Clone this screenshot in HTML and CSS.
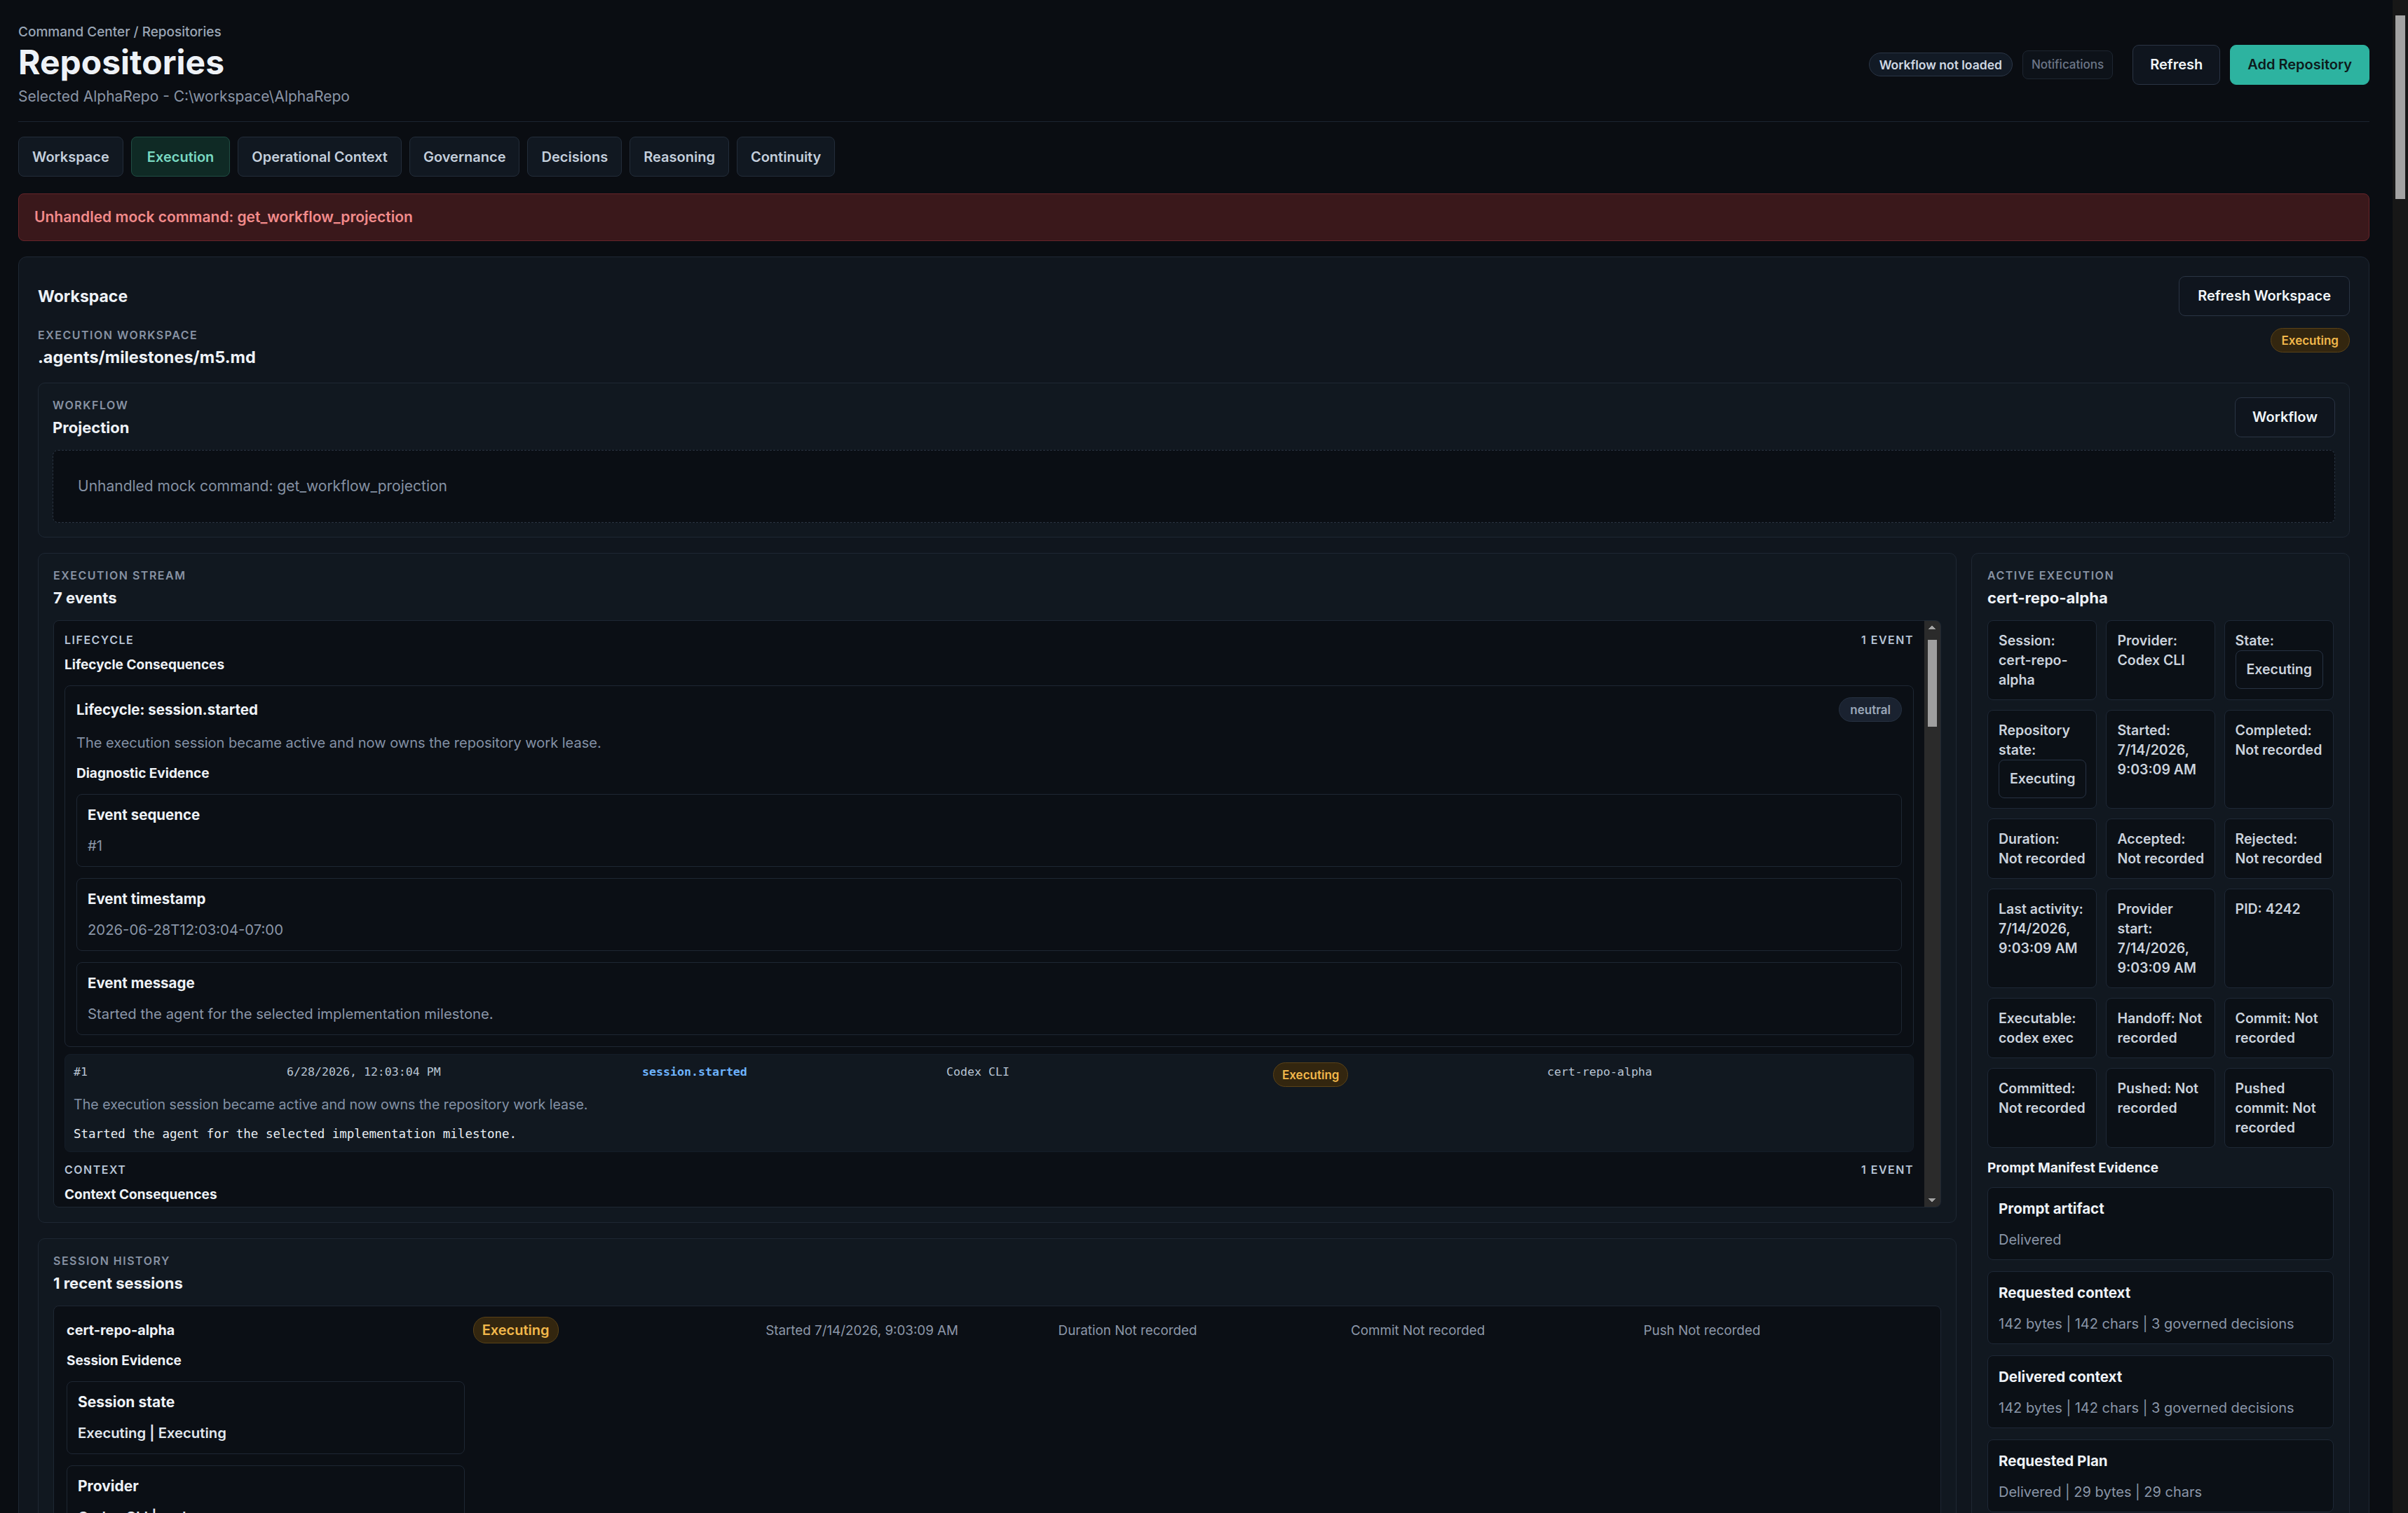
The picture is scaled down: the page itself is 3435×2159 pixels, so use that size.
FILE: index.html
```html
<!DOCTYPE html>
<html lang="en">
<head>
  <meta charset="UTF-8">
  <title>Repositories</title>
  <meta name="viewport" content="width=device-width, initial-scale=1.0">
  <link rel="stylesheet" href="styles.css">
</head>
<body>
  <div class="page">
    <header class="top">
      <div>
        <div class="crumb">Command Center / Repositories</div>
        <h1>Repositories</h1>
        <div class="sub">Selected AlphaRepo - C:\workspace\AlphaRepo</div>
      </div>
      <div class="top-actions">
        <span class="chip">Workflow not loaded</span>
        <span class="chip chip-dim">Notifications</span>
        <button class="btn btn-gap">Refresh</button>
        <button class="btn btn-primary">Add Repository</button>
      </div>
    </header>

    <nav class="tabs">
      <a class="tab" href="#">Workspace</a>
      <a class="tab active" href="#">Execution</a>
      <a class="tab" href="#">Operational Context</a>
      <a class="tab" href="#">Governance</a>
      <a class="tab" href="#">Decisions</a>
      <a class="tab" href="#">Reasoning</a>
      <a class="tab" href="#">Continuity</a>
    </nav>

    <div class="alert">Unhandled mock command: get_workflow_projection</div>

    <section class="card">
      <div class="row-between">
        <h2>Workspace</h2>
        <button class="btn btn-wide">Refresh Workspace</button>
      </div>
      <div class="row-between ws-meta">
        <div>
          <div class="label">Execution workspace</div>
          <div class="value ws-value">.agents/milestones/m5.md</div>
        </div>
        <span class="pill pill-amber">Executing</span>
      </div>

      <div class="panel workflow">
        <div class="row-between">
          <div>
            <div class="label">Workflow</div>
            <div class="value">Projection</div>
          </div>
          <button class="btn">Workflow</button>
        </div>
        <div class="empty">Unhandled mock command: get_workflow_projection</div>
      </div>

      <div class="exec-grid">
        <div class="exec-main">
          <div class="panel">
            <div class="label">Execution stream</div>
            <div class="value">7 events</div>

            <div class="stream-scroll">
              <div class="group">
                <div class="group-head">
                  <span class="kind">Lifecycle</span>
                  <span class="kind">1 event</span>
                </div>
                <div class="group-title">Lifecycle Consequences</div>
                <div class="event">
                  <div class="event-head">
                    <span class="event-title">Lifecycle: session.started</span>
                    <span class="pill pill-neutral">neutral</span>
                  </div>
                  <p class="event-desc">The execution session became active and now owns the repository work lease.</p>
                  <div class="evidence-title">Diagnostic Evidence</div>
                  <div class="evidence-list">
                    <div class="evidence"><div class="ev-label">Event sequence</div><div class="ev-value">#1</div></div>
                    <div class="evidence"><div class="ev-label">Event timestamp</div><div class="ev-value">2026-06-28T12:03:04-07:00</div></div>
                    <div class="evidence"><div class="ev-label">Event message</div><div class="ev-value">Started the agent for the selected implementation milestone.</div></div>
                  </div>
                </div>
                <div class="raw">
                  <div class="raw-grid">
                    <span>#1</span>
                    <span>6/28/2026, 12:03:04 PM</span>
                    <span class="raw-kind">session.started</span>
                    <span>Codex CLI</span>
                    <span><span class="pill pill-amber">Executing</span></span>
                    <span>cert-repo-alpha</span>
                  </div>
                  <div class="raw-desc">The execution session became active and now owns the repository work lease.</div>
                  <div class="raw-msg">Started the agent for the selected implementation milestone.</div>
                </div>
              </div>

              <div class="group">
                <div class="group-head">
                  <span class="kind">Context</span>
                  <span class="kind">1 event</span>
                </div>
                <div class="group-title">Context Consequences</div>
                <div class="event">
                  <div class="event-head">
                    <span class="event-title">Context: context.delivered</span>
                    <span class="pill pill-neutral">neutral</span>
                  </div>
                  <p class="event-desc">Governed context was assembled and delivered to the provider prompt.</p>
                  <div class="evidence-title">Diagnostic Evidence</div>
                  <div class="evidence-list">
                    <div class="evidence"><div class="ev-label">Event sequence</div><div class="ev-value">#2</div></div>
                    <div class="evidence"><div class="ev-label">Event timestamp</div><div class="ev-value">2026-06-28T12:03:05-07:00</div></div>
                    <div class="evidence"><div class="ev-label">Event message</div><div class="ev-value">Delivered 142 bytes of governed context.</div></div>
                  </div>
                </div>
              </div>

              <div class="group">
                <div class="group-head">
                  <span class="kind">Prompt</span>
                  <span class="kind">2 events</span>
                </div>
                <div class="group-title">Prompt Consequences</div>
                <div class="event">
                  <div class="event-head">
                    <span class="event-title">Prompt: prompt.delivered</span>
                    <span class="pill pill-neutral">neutral</span>
                  </div>
                  <p class="event-desc">The prompt artifact was written and handed to the provider.</p>
                  <div class="evidence-title">Diagnostic Evidence</div>
                  <div class="evidence-list">
                    <div class="evidence"><div class="ev-label">Event sequence</div><div class="ev-value">#3</div></div>
                    <div class="evidence"><div class="ev-label">Event timestamp</div><div class="ev-value">2026-06-28T12:03:06-07:00</div></div>
                    <div class="evidence"><div class="ev-label">Event message</div><div class="ev-value">Prompt manifest recorded.</div></div>
                  </div>
                </div>
              </div>

              <div class="group">
                <div class="group-head">
                  <span class="kind">Provider</span>
                  <span class="kind">3 events</span>
                </div>
                <div class="group-title">Provider Consequences</div>
                <div class="event">
                  <div class="event-head">
                    <span class="event-title">Provider: provider.started</span>
                    <span class="pill pill-neutral">neutral</span>
                  </div>
                  <p class="event-desc">Codex CLI process started for the active session.</p>
                  <div class="evidence-title">Diagnostic Evidence</div>
                  <div class="evidence-list">
                    <div class="evidence"><div class="ev-label">Event sequence</div><div class="ev-value">#4</div></div>
                    <div class="evidence"><div class="ev-label">Event timestamp</div><div class="ev-value">2026-06-28T12:03:07-07:00</div></div>
                    <div class="evidence"><div class="ev-label">Event message</div><div class="ev-value">PID 4242</div></div>
                  </div>
                </div>
              </div>
            </div>
          </div>

          <div class="panel">
            <div class="label">Session history</div>
            <div class="value">1 recent sessions</div>
            <div class="sessions">
              <div class="session-grid">
                <span class="session-name">cert-repo-alpha</span>
                <span><span class="pill pill-amber pill-lg">Executing</span></span>
                <span class="muted">Started 7/14/2026, 9:03:09 AM</span>
                <span class="muted">Duration Not recorded</span>
                <span class="muted">Commit Not recorded</span>
                <span class="muted">Push Not recorded</span>
              </div>
              <div class="session-grid">
                <div>
                  <div class="evidence-title">Session Evidence</div>
                  <div class="evidence-list">
                    <div class="evidence"><div class="ev-label">Session state</div><div class="ev-value strong">Executing | Executing</div></div>
                    <div class="evidence"><div class="ev-label">Provider</div><div class="ev-value strong">Codex CLI | codex exec</div></div>
                    <div class="evidence"><div class="ev-label">Started</div><div class="ev-value strong">7/14/2026, 9:03:09 AM</div></div>
                    <div class="evidence"><div class="ev-label">Duration</div><div class="ev-value strong">Not recorded</div></div>
                  </div>
                </div>
              </div>
            </div>
          </div>
        </div>

        <aside class="panel active">
          <div class="label">Active execution</div>
          <div class="value">cert-repo-alpha</div>
          <div class="cells">
            <div class="cell">Session: cert-repo-alpha</div>
            <div class="cell">Provider: Codex CLI</div>
            <div class="cell">State: <span class="state-box">Executing</span></div>
            <div class="cell">Repository state: <span class="state-box">Executing</span></div>
            <div class="cell">Started: 7/14/2026, 9:03:09 AM</div>
            <div class="cell">Completed: Not recorded</div>
            <div class="cell">Duration: <span class="nw">Not recorded</span></div>
            <div class="cell">Accepted: Not recorded</div>
            <div class="cell">Rejected: Not recorded</div>
            <div class="cell">Last activity: 7/14/2026, 9:03:09 AM</div>
            <div class="cell">Provider start: 7/14/2026, 9:03:09 AM</div>
            <div class="cell">PID: 4242</div>
            <div class="cell">Executable: codex exec</div>
            <div class="cell">Handoff: Not recorded</div>
            <div class="cell">Commit: Not recorded</div>
            <div class="cell">Committed: Not recorded</div>
            <div class="cell">Pushed: Not recorded</div>
            <div class="cell">Pushed commit: Not recorded</div>
          </div>
          <div class="manifest-title">Prompt Manifest Evidence</div>
          <div class="manifest">
            <div class="m-item"><div class="m-label">Prompt artifact</div><div class="m-value">Delivered</div></div>
            <div class="m-item"><div class="m-label">Requested context</div><div class="m-value">142 bytes | 142 chars | 3 governed decisions</div></div>
            <div class="m-item"><div class="m-label">Delivered context</div><div class="m-value">142 bytes | 142 chars | 3 governed decisions</div></div>
            <div class="m-item"><div class="m-label">Requested Plan</div><div class="m-value">Delivered | 29 bytes | 29 chars</div></div>
            <div class="m-item"><div class="m-label">Delivered Plan</div><div class="m-value">Delivered | 29 bytes | 29 chars</div></div>
          </div>
        </aside>
      </div>
    </section>
  </div>
</body>
</html>
```

FILE: styles.css
```css
* {
  box-sizing: border-box;
}
html {
  background:
    linear-gradient(#a3a3a3, #a3a3a3) right 4px top 22px / 14px 262px no-repeat,
    linear-gradient(#171717, #171717) right top / 22px 100% no-repeat,
    #0a0d12;
}
body {
  margin: 0;
  font-family: Inter, "Noto Sans", sans-serif;
  color: #eef2f7;
}
button {
  font: inherit;
  cursor: pointer;
}
p {
  margin: 0;
}
.page {
  padding: 34px 55px 60px 26px;
}

/* header */
.top {
  display: flex;
  justify-content: space-between;
  align-items: center;
  padding-bottom: 23px;
  border-bottom: 1px solid #1c2430;
}
.crumb {
  font-size: 19px;
  line-height: 24px;
  font-weight: 500;
  color: #9aa6b6;
}
h1 {
  margin: 3px 0 9px;
  font-size: 48px;
  line-height: 56px;
  font-weight: 700;
  color: #eef2f7;
}
.sub {
  font-size: 21px;
  line-height: 24px;
  color: #8a95a6;
}
.top-actions {
  display: flex;
  align-items: center;
  gap: 14px;
}
.chip {
  display: inline-flex;
  align-items: center;
  height: 34px;
  padding: 0 14px;
  border-radius: 17px;
  background: #121a25;
  border: 1px solid #2a3546;
  color: #cfd8e3;
  font-size: 17.5px;
  font-weight: 600;
}
.chip-dim {
  height: 41px;
  padding: 0 12px;
  border-radius: 8px;
  background: #0d1219;
  border-color: #1e2631;
  color: #6c7687;
  font-size: 17px;
  font-weight: 500;
}
.btn {
  display: inline-flex;
  align-items: center;
  height: 57px;
  padding: 0 24px;
  line-height: 27px;
  font-size: 20px;
  font-weight: 600;
  color: #f1f5f9;
  background: #0f151e;
  border: 1px solid #2a3444;
  border-radius: 9px;
}
.btn-wide {
  padding: 0 26px;
}
.btn-gap {
  margin-left: 14px;
}
.btn-primary {
  background: #2db3a0;
  border-color: #2db3a0;
  color: #0d1b1c;
}

/* tabs */
.tabs {
  display: flex;
  align-items: center;
  gap: 11px;
  margin-top: 21px;
}
.tab {
  display: flex;
  align-items: center;
  height: 57px;
  padding: 0 19px;
  font-size: 20px;
  font-weight: 600;
  color: #c4cfdc;
  text-decoration: none;
  background: #111821;
  border: 1px solid #232d3a;
  border-radius: 8px;
}
.tab.active {
  color: #79d9c2;
  background: #0f2a25;
  border-color: #1f4d43;
}

.alert {
  margin-top: 24px;
  padding: 20px 22px;
  line-height: 26px;
  font-size: 21px;
  font-weight: 600;
  color: #f28b8b;
  background: #3a181b;
  border: 1px solid #66242a;
  border-radius: 8px;
}

/* cards */
.card {
  margin-top: 22px;
  padding: 27px;
  background: #10161e;
  border: 1px solid #1e2733;
  border-radius: 12px;
}
.row-between {
  display: flex;
  justify-content: space-between;
  align-items: center;
}
h2 {
  margin: 0;
  font-size: 23px;
  line-height: 28px;
  font-weight: 700;
}
.ws-meta {
  margin-top: 17px;
  align-items: flex-start;
}
.label {
  font-size: 16px;
  line-height: 20px;
  font-weight: 600;
  letter-spacing: 1.5px;
  text-transform: uppercase;
  color: #8792a3;
}
.value {
  margin-top: 8px;
  font-size: 22px;
  line-height: 28px;
  font-weight: 700;
  color: #eef2f7;
}
.ws-value {
  font-size: 23.5px;
}
.pill {
  display: inline-flex;
  align-items: center;
  height: 35px;
  padding: 0 15px;
  border-radius: 18px;
  font-size: 17px;
  font-weight: 600;
}
.pill-amber {
  color: #f2b84b;
  background: #33260f;
  border: 1px solid #5a4217;
}
.pill-neutral {
  color: #9aa7b8;
  background: #1a2230;
  border: 1px solid #263141;
}
.pill-lg {
  height: 38px;
  padding: 0 12px;
  font-size: 20px;
}
.panel {
  padding: 21px;
  background: #111820;
  border: 1px solid #1e2733;
  border-radius: 10px;
}
.workflow {
  margin-top: 22px;
  padding: 20px;
}
.empty {
  margin-top: 18px;
  padding: 37px 35px;
  font-size: 21px;
  line-height: 28px;
  color: #8591a3;
  background: #0a0e14;
  border: 1px dashed #2a3442;
  border-radius: 8px;
}

.exec-grid {
  display: grid;
  grid-template-columns: minmax(0, 1fr) 540px;
  gap: 21px;
  align-items: start;
  margin-top: 22px;
}
.exec-main {
  display: flex;
  flex-direction: column;
  gap: 22px;
}

/* execution stream, with its scrollbar track painted on the right */
.stream-scroll {
  height: 838px;
  margin-top: 18px;
  padding: 17px 38px 17px 15px;
  overflow: hidden;
  border: 1px solid #1e2733;
  border-radius: 8px;
  background:
    linear-gradient(to bottom right, transparent 50%, #a3a3a3 50%) right 12px top 6px / 5px 6px no-repeat,
    linear-gradient(to bottom left, transparent 50%, #a3a3a3 50%) right 7px top 6px / 5px 6px no-repeat,
    linear-gradient(to top right, transparent 50%, #a3a3a3 50%) right 12px bottom 6px / 5px 6px no-repeat,
    linear-gradient(to top left, transparent 50%, #a3a3a3 50%) right 7px bottom 6px / 5px 6px no-repeat,
    linear-gradient(#9f9f9f, #9f9f9f) right 5px top 27px / 13px 124px no-repeat,
    linear-gradient(#2b2b2b, #2b2b2b) right top / 23px 100% no-repeat,
    #0b0f15;
}
.group + .group {
  margin-top: 15px;
}
.group-head {
  display: flex;
  justify-content: space-between;
}
.kind {
  font-size: 16px;
  line-height: 20px;
  font-weight: 600;
  letter-spacing: 1.5px;
  text-transform: uppercase;
  color: #b7c4d6;
}
.group-title {
  margin-top: 14px;
  font-size: 19px;
  line-height: 24px;
  font-weight: 700;
}
.event {
  margin-top: 17px;
  padding: 16px;
  background: #0b0f15;
  border: 1px solid #1e2733;
  border-radius: 8px;
}
.event-head {
  display: flex;
  justify-content: space-between;
  align-items: center;
}
.event-title {
  font-size: 20.5px;
  font-weight: 700;
}
.event-desc {
  margin-top: 18px;
  font-size: 20px;
  line-height: 24px;
  color: #8391a5;
}
.evidence-title {
  margin-top: 20px;
  font-size: 19px;
  line-height: 24px;
  font-weight: 700;
}
.evidence-list {
  display: flex;
  flex-direction: column;
  gap: 16px;
  margin-top: 17px;
}
.evidence {
  padding: 17px 15px;
  background: #0b0f15;
  border: 1px solid #1e2733;
  border-radius: 8px;
}
.ev-label {
  font-size: 20.5px;
  line-height: 24px;
  font-weight: 700;
}
.ev-value {
  margin-top: 20px;
  font-size: 20.3px;
  line-height: 24px;
  color: #8a96a8;
}
.ev-value.strong {
  color: #e1e7ee;
  font-weight: 600;
}
.raw {
  margin-top: 10px;
  padding: 12px 12px 13px;
  background: #111820;
  border: 1px solid #151d28;
  border-radius: 8px;
}
.raw-grid {
  display: grid;
  grid-template-columns: 304px 507px 434px 466px 391px 1fr;
  align-items: start;
  font-family: "DejaVu Sans Mono", "Liberation Mono", monospace;
  font-size: 16.6px;
  line-height: 24px;
  color: #b8c4d3;
}
.raw-grid > span {
  padding-top: 1px;
}
.raw-kind {
  color: #6eb4ff;
  font-weight: 700;
}
.raw-grid .pill {
  font-family: Inter, "Noto Sans", sans-serif;
  margin-top: -2px;
  padding: 0 12px;
}
.raw-desc {
  margin-top: 13px;
  font-size: 19.6px;
  line-height: 24px;
  color: #8391a5;
}
.raw-msg {
  margin-top: 18px;
  font-family: "DejaVu Sans Mono", "Liberation Mono", monospace;
  font-size: 17.5px;
  line-height: 24px;
  color: #e8edf3;
}

/* session history */
.sessions {
  margin-top: 18px;
  padding: 15px 18px;
  background: #0b0f15;
  border: 1px solid #1e2733;
  border-radius: 8px;
}
.session-grid {
  display: grid;
  grid-template-columns: 1.4fr repeat(5, 1fr);
  gap: 12px;
  align-items: center;
}
.session-grid .evidence-title {
  margin-top: 13px;
}
.session-grid .ev-label {
  font-size: 21px;
}
.session-name {
  font-size: 19.8px;
  font-weight: 700;
}
.muted {
  font-size: 18.8px;
  color: #8d98a9;
}

/* active execution */
.active {
  padding: 21px 22px;
}
.cells {
  display: grid;
  grid-template-columns: repeat(3, 1fr);
  gap: 14px 13px;
  margin-top: 18px;
}
.cell {
  padding: 14px 14px 14px 15px;
  font-size: 19.5px;
  line-height: 28px;
  font-weight: 600;
  color: #cbd3dd;
  background: #0b1016;
  border: 1px solid #1e2836;
  border-radius: 8px;
}
.nw {
  white-space: nowrap;
}
.state-box {
  display: table;
  padding: 13px 15px;
  line-height: 27px;
  border: 1px solid #273243;
  border-radius: 8px;
}
.manifest-title {
  margin-top: 17px;
  font-size: 19px;
  line-height: 24px;
  font-weight: 700;
}
.manifest {
  display: flex;
  flex-direction: column;
  gap: 16px;
  margin-top: 15px;
}
.m-item {
  padding: 16px 15px 14px;
  background: #0b1016;
  border: 1px solid #1e2836;
  border-radius: 8px;
}
.m-label {
  font-size: 20.5px;
  line-height: 28px;
  font-weight: 700;
}
.m-value {
  margin-top: 16px;
  font-size: 20px;
  line-height: 28px;
  color: #8a96a8;
}
```
